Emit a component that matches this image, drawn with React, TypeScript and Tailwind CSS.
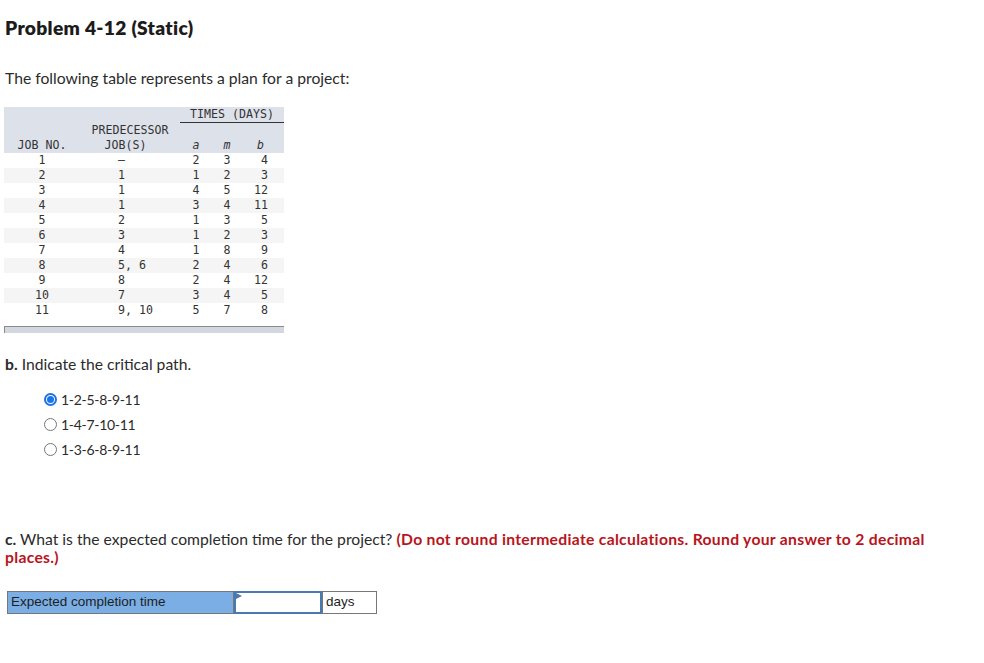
import React from "react";

const rows: [string, string, string, string, string][] = [
  ["1", "–", "2", "3", "4"],
  ["2", "1", "1", "2", "3"],
  ["3", "1", "4", "5", "12"],
  ["4", "1", "3", "4", "11"],
  ["5", "2", "1", "3", "5"],
  ["6", "3", "1", "2", "3"],
  ["7", "4", "1", "8", "9"],
  ["8", "5, 6", "2", "4", "6"],
  ["9", "8", "2", "4", "12"],
  ["10", "7", "3", "4", "5"],
  ["11", "9, 10", "5", "7", "8"],
];

const mono = { fontFamily: '"DejaVu Sans Mono", "Liberation Mono", monospace' };

function Radio({ checked }: { checked: boolean }) {
  return checked ? (
    <span className="flex h-[13px] w-[13px] items-center justify-center rounded-full border-[2px] border-[#1a73e8] bg-white">
      <span className="h-[7px] w-[7px] rounded-full bg-[#1a73e8]" />
    </span>
  ) : (
    <span className="h-[13px] w-[13px] rounded-full border border-[#767676] bg-white" />
  );
}

export default function App() {
  return (
    <div
      className="min-h-[663px] bg-white pl-[4px] text-[#2b2b2b]"
      style={{ fontFamily: 'Lato, "Noto Sans", sans-serif' }}
    >
      <div className="pl-[1px] pt-[16px] text-[19.2px] font-extrabold leading-[24px] tracking-[0.3px] text-[#1c1c1c]">
        Problem 4-12 (Static)
      </div>
      <div className="mt-[28px] pl-[1px] text-[15.7px] leading-[20px]">
        The following table represents a plan for a project:
      </div>

      <div className="mt-[19px] w-[280px] text-[11.6px] leading-[15px] text-[#333]" style={mono}>
        <div className="grid grid-cols-[76px_100px_32px_30px_42px] bg-[#dde1ea]">
          <div className="col-span-2" />
          <div className="col-span-3 border-b border-[#333] text-center">TIMES (DAYS)</div>
          <div />
          <div className="text-center">PREDECESSOR</div>
          <div className="col-span-3" />
          <div className="text-center">JOB NO.</div>
          <div className="pr-[9px] text-center">JOB(S)</div>
          <div className="text-center italic">a</div>
          <div className="text-center italic">m</div>
          <div className="pr-[20px] text-right italic">b</div>
        </div>
        {rows.map((r, i) => (
          <div
            key={i}
            className={`grid grid-cols-[76px_100px_32px_30px_42px] ${i % 2 === 1 ? "bg-[#f5f5f5]" : "bg-white"}`}
          >
            <div className="text-center">{r[0]}</div>
            <div className="pl-[38px]">{r[1]}</div>
            <div className="text-center">{r[2]}</div>
            <div className="text-center">{r[3]}</div>
            <div className="pr-[16px] text-right">{r[4]}</div>
          </div>
        ))}
        <div className="mt-[8px] h-[7px] border-l border-t border-[#8a8a8a] bg-[#d3d7df]" />
      </div>

      <div className="mt-[21px] pl-[1px] text-[15.7px] leading-[20px]">
        <span className="font-bold">b.</span> Indicate the critical path.
      </div>
      <div className="mt-[13px] pl-[40px] text-[14px]">
        {[
          ["1-2-5-8-9-11", true],
          ["1-4-7-10-11", false],
          ["1-3-6-8-9-11", false],
        ].map(([t, c]) => (
          <div key={t as string} className="flex h-[25px] items-center gap-[4px]">
            <Radio checked={c as boolean} />
            <span className="tracking-[-0.3px]">{t as string}</span>
          </div>
        ))}
      </div>

      <div className="mt-[68px] pl-[1px] text-[15.7px] leading-[18px]">
        <span className="font-bold">c.</span> What is the expected completion time for the project?{" "}
        <span className="font-bold tracking-[0.3px] text-[#b8141c]">
          (Do not round intermediate calculations. Round your answer to 2 decimal
          <br />
          places.)
        </span>
      </div>

      <div className="ml-[3px] mt-[25px] flex h-[23px] text-[13.5px]" style={{ fontFamily: '"Liberation Sans", Arial, sans-serif' }}>
        <div className="flex w-[227px] items-center border border-[#777] bg-[#7aaee5] pl-[3px] text-[#1e1e1e]">
          Expected completion time
        </div>
        <div className="relative w-[88px] border-[2px] border-[#4a78b0] bg-white">
          <span className="absolute left-0 top-0 h-0 w-0 border-y-[3px] border-l-[6px] border-y-transparent border-l-[#4a78b0]" />
        </div>
        <div className="flex w-[55px] items-center border border-[#777] bg-white pl-[3px] text-[#1e1e1e]">days</div>
      </div>
    </div>
  );
}
